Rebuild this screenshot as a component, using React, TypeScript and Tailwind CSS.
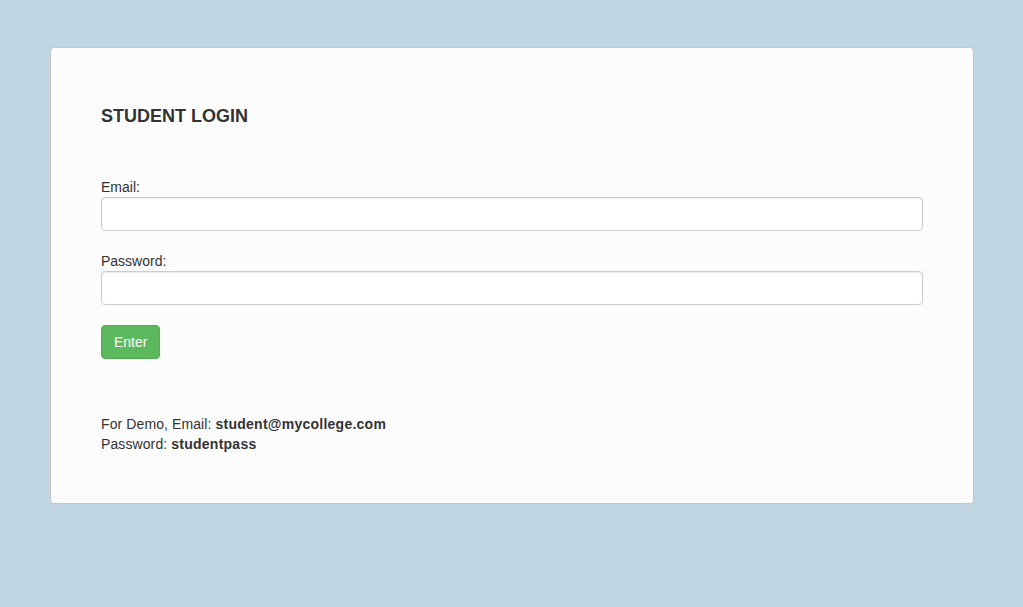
export default function App() {
  return (
    <div className="min-h-[607px] bg-[#c1d6e3] pl-[50px] pr-[49px] pt-[47px] font-['Liberation_Sans',Arial,sans-serif] text-[14px] leading-[20px] text-[#333]">
      <div className="rounded-[4px] border border-[#c4c4c4] bg-[#fcfcfc] px-[50px] pt-[58px] pb-[49px]">
        <h4 className="text-[18px] font-bold leading-[20px]">STUDENT LOGIN</h4>

        <form className="mt-[51px]" onSubmit={(e) => e.preventDefault()}>
          <div className="mb-[20px]">
            <label className="block">Email:</label>
            <input
              type="email"
              className="block h-[34px] w-full rounded-[4px] border border-[#ccc] bg-white px-3 shadow-[inset_0_1px_1px_rgba(0,0,0,0.075)] outline-none"
            />
          </div>
          <div className="mb-[20px]">
            <label className="block">Password:</label>
            <input
              type="password"
              className="block h-[34px] w-full rounded-[4px] border border-[#ccc] bg-white px-3 shadow-[inset_0_1px_1px_rgba(0,0,0,0.075)] outline-none"
            />
          </div>
          <button
            type="submit"
            className="h-[34px] rounded-[4px] border border-[#4cae4c] bg-[#5cb85c] px-[12px] text-white"
          >
            Enter
          </button>
        </form>

        <p className="mt-[55px] tracking-[0.1px]">
          For Demo, Email: <b className="tracking-[0.25px]">student@mycollege.com</b>
          <br />
          Password: <b className="tracking-[0.25px]">studentpass</b>
        </p>
      </div>
    </div>
  )
}
